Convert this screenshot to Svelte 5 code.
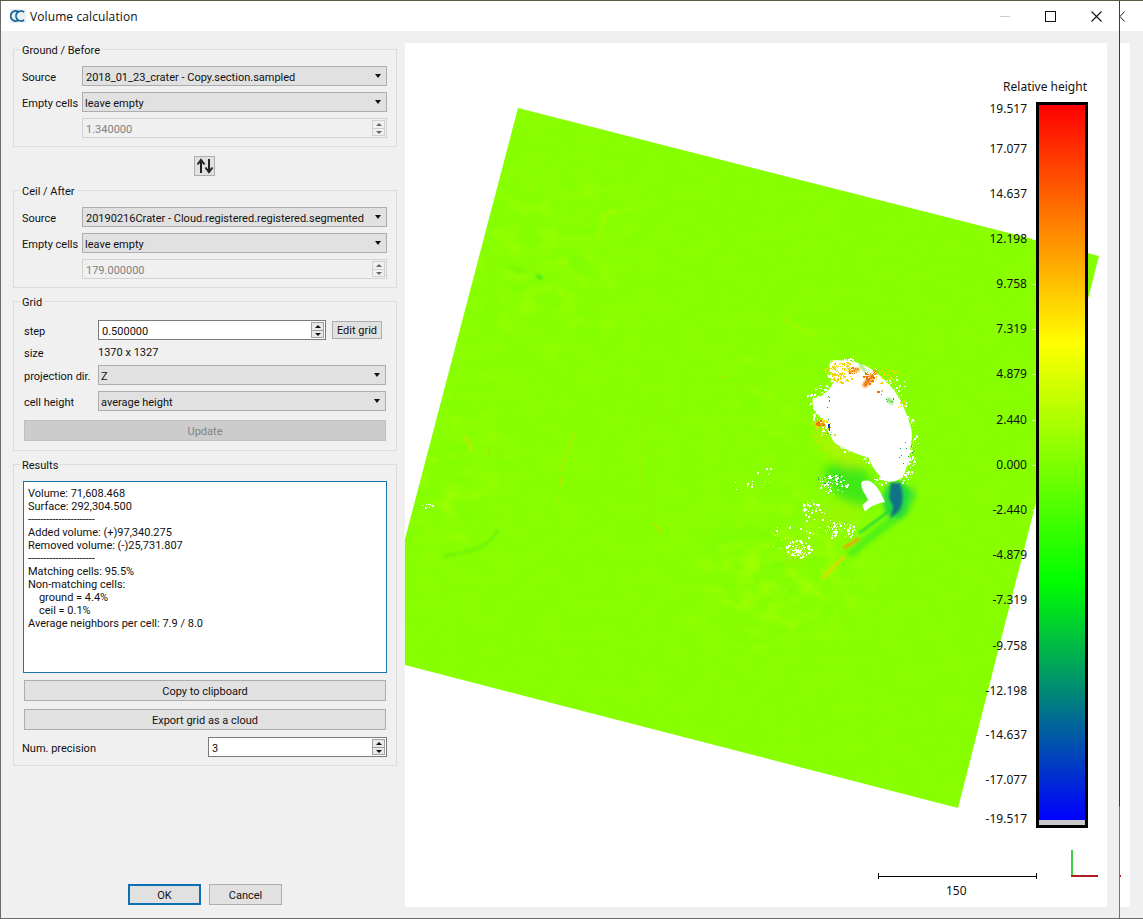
<script>
	// seeded so the specks land in the same place on every run
	let seed = 41;
	function rnd() {
		seed = (seed * 16807) % 2147483647;
		return seed / 2147483647;
	}

	function cluster(cx, cy, rx, ry, n) {
		const out = [];
		for (let i = 0; i < n; i++) {
			const a = rnd() * Math.PI * 2;
			const r = Math.sqrt(rnd());
			out.push({ x: Math.round(cx + Math.cos(a) * r * rx), y: Math.round(cy + Math.sin(a) * r * ry), s: rnd() > 0.7 ? 2 : 1 });
		}
		return out;
	}

	// rough fringe along the crater rim
	const rim = [[812, 400], [820, 392], [830, 388], [833, 375], [850, 362], [870, 372], [885, 385], [900, 400], [908, 420], [912, 440], [910, 460], [902, 478], [880, 478], [868, 458], [845, 445], [825, 430]];
	const rimSpecks = rim.flatMap(([x, y]) => cluster(x, y, 7, 7, 22));

	// page coordinates
	const whiteSpecks = [
		...rimSpecks,
		...cluster(833, 484, 14, 10, 70),
		...cluster(799, 548, 13, 9, 90),
		...cluster(810, 506, 10, 6, 28),
		...cluster(840, 530, 16, 8, 60),
		...cluster(820, 523, 22, 12, 26),
		...cluster(908, 462, 6, 18, 50),
		...cluster(838, 372, 14, 10, 70),
		...cluster(818, 412, 8, 12, 40),
		...cluster(742, 484, 12, 6, 8),
		...cluster(768, 475, 14, 7, 7),
		...cluster(430, 505, 12, 2, 10),
		...cluster(790, 535, 20, 20, 22),
		...cluster(890, 385, 16, 10, 30)
	];
	const yellowSpecks = [
		...cluster(838, 368, 14, 8, 80),
		...cluster(840, 378, 12, 5, 40),
		...cluster(822, 424, 10, 7, 34),
		...cluster(885, 376, 18, 8, 36),
		...cluster(900, 398, 6, 10, 16),
		...cluster(825, 440, 14, 12, 16)
	];
	const orangeSpecks = [...cluster(853, 370, 5, 4, 16), ...cluster(820, 423, 4, 3, 10), ...cluster(868, 378, 5, 7, 36), ...cluster(880, 392, 3, 3, 6)];
	const greenSpecks = [...cluster(830, 420, 4, 28, 8), ...cluster(905, 450, 8, 14, 10), ...cluster(830, 480, 14, 6, 14), ...cluster(890, 400, 4, 4, 5)];

	const ticks = [
		['19.517', 109], ['17.077', 149], ['14.637', 194], ['12.198', 239], ['9.758', 284],
		['7.319', 329], ['4.879', 374], ['2.440', 420], ['0.000', 465], ['-2.440', 510],
		['-4.879', 555], ['-7.319', 600], ['-9.758', 646], ['-12.198', 691], ['-14.637', 735],
		['-17.077', 780], ['-19.517', 819]
	];

	const results = `Volume: 71,608.468
Surface: 292,304.500
----------------------
Added volume: (+)97,340.275
Removed volume: (-)25,731.807
----------------------
Matching cells: 95.5%
Non-matching cells:
    ground = 4.4%
    ceil = 0.1%
Average neighbors per cell: 7.9 / 8.0`;
</script>

<div class="screen">
	<div class="window">
		<header class="titlebar">
			<svg class="logo" viewBox="0 0 16 14" width="16" height="14">
				<rect x="0" y="0" width="16" height="14" fill="#e8f1f6" />
				<path d="M8 2.600 A5 5 0 1 0 8 11.400" fill="none" stroke="#17618f" stroke-width="1.700" />
				<path d="M14 3 A5 5 0 1 0 14 11" fill="none" stroke="#17618f" stroke-width="1.700" />
			</svg>
			<span class="title">Volume calculation</span>
			<div class="controls">
				<span class="min"></span>
				<span class="max"></span>
				<svg class="close" viewBox="0 0 11 11" width="11" height="11">
					<path d="M0.500 0.500 L10.500 10.500 M10.500 0.500 L0.500 10.500" stroke="#111" stroke-width="1.100" />
				</svg>
			</div>
		</header>

		<div class="body">
			<aside class="panel">
				<section class="group g-source">
					<span class="group-title">Ground / Before</span>
					<div class="form-row">
						<span class="lbl">Source</span>
						<div class="combo"><span class="mid">2018_01_23_crater - Copy.section.sampled</span><i></i></div>
					</div>
					<div class="form-row">
						<span class="lbl">Empty cells</span>
						<div class="combo"><span>leave empty</span><i></i></div>
					</div>
					<div class="form-row">
						<span class="lbl"></span>
						<div class="spin disabled">
							<span>1.340000</span>
							<div class="arrows"><b class="up"></b><b class="down"></b></div>
						</div>
					</div>
				</section>

				<div class="swap-row">
					<button class="swap" aria-label="Swap">
						<svg viewBox="0 0 18 16" width="18" height="16">
							<path d="M5 15 V3 M1.500 6.500 L5 2 L8.500 6.500" fill="none" stroke="#222" stroke-width="2" />
							<path d="M13 1 V13 M9.500 9.500 L13 14 L16.500 9.500" fill="none" stroke="#222" stroke-width="2" />
						</svg>
					</button>
				</div>

				<section class="group g-source">
					<span class="group-title">Ceil / After</span>
					<div class="form-row">
						<span class="lbl">Source</span>
						<div class="combo"><span class="mid">20190216Crater - Cloud.registered.registered.segmented</span><i></i></div>
					</div>
					<div class="form-row">
						<span class="lbl">Empty cells</span>
						<div class="combo"><span>leave empty</span><i></i></div>
					</div>
					<div class="form-row">
						<span class="lbl"></span>
						<div class="spin disabled">
							<span>179.000000</span>
							<div class="arrows"><b class="up"></b><b class="down"></b></div>
						</div>
					</div>
				</section>

				<section class="group g-grid">
					<span class="group-title">Grid</span>
					<div class="grid-row">
						<span class="lbl2">step</span>
						<div class="spin live step">
							<span>0.500000</span>
							<div class="arrows"><b class="up"></b><b class="down"></b></div>
						</div>
						<button class="edit">Edit grid</button>
					</div>
					<div class="grid-row size">
						<span class="lbl2">size</span>
						<span>1370 x 1327</span>
					</div>
					<div class="grid-row">
						<span class="lbl2">projection dir.</span>
						<div class="combo"><span>Z</span><i></i></div>
					</div>
					<div class="grid-row">
						<span class="lbl2">cell height</span>
						<div class="combo"><span>average height</span><i></i></div>
					</div>
					<button class="wide off">Update</button>
				</section>

				<section class="group g-results">
					<span class="group-title">Results</span>
					<div class="report">{results}</div>
					<button class="wide copy">Copy to clipboard</button>
					<button class="wide export">Export grid as a cloud</button>
					<div class="precision">
						<span class="lbl-prec">Num. precision</span>
						<div class="spin live prec">
							<span>3</span>
							<div class="arrows"><b class="up"></b><b class="down"></b></div>
						</div>
					</div>
				</section>

				<div class="actions">
					<button class="dlg ok">OK</button>
					<button class="dlg">Cancel</button>
				</div>
			</aside>

			<main class="view">
				<svg class="cloud" viewBox="405 43 702 864" width="702" height="864">
					<defs>
						<filter id="b1" x="-50%" y="-50%" width="200%" height="200%"><feGaussianBlur stdDeviation="0.5" /></filter>
						<filter id="b2" x="-50%" y="-50%" width="200%" height="200%"><feGaussianBlur stdDeviation="1.500" /></filter>
						<filter id="c3" x="-50%" y="-50%" width="200%" height="200%"><feGaussianBlur stdDeviation="3" /></filter>
						<filter id="c8" x="-50%" y="-50%" width="200%" height="200%"><feGaussianBlur stdDeviation="8" /></filter>
						<filter id="c20" x="-50%" y="-50%" width="200%" height="200%"><feGaussianBlur stdDeviation="14" /></filter>
						<filter id="soft" x="-50%" y="-50%" width="200%" height="200%"><feGaussianBlur stdDeviation="30" /></filter>
						<filter id="mottle-green" x="0" y="0" width="100%" height="100%" color-interpolation-filters="sRGB">
							<feTurbulence type="fractalNoise" baseFrequency="0.03 0.04" numOctaves="3" seed="7" />
							<feColorMatrix values="0 0 0 0 0.42  0 0 0 0 0.98  0 0 0 0 0.03  1.600 0 0 0 -0.700" />
						</filter>
						<filter id="mottle-yellow" x="0" y="0" width="100%" height="100%" color-interpolation-filters="sRGB">
							<feTurbulence type="fractalNoise" baseFrequency="0.05 0.07" numOctaves="3" seed="19" />
							<feColorMatrix values="0 0 0 0 0.72  0 0 0 0 1  0 0 0 0 0  1.800 0 0 0 -0.800" />
						</filter>
						<mask id="rough" maskUnits="userSpaceOnUse" x="405" y="43" width="702" height="864">
							<rect x="405" y="43" width="702" height="864" fill="#181818" />
							<g filter="url(#soft)">
								<ellipse cx="540" cy="260" rx="100" ry="90" fill="#777" />
								<ellipse cx="450" cy="470" rx="55" ry="100" fill="#888" />
								<ellipse cx="780" cy="570" rx="80" ry="60" fill="#fff" />
								<ellipse cx="770" cy="400" rx="50" ry="60" fill="#666" />
							</g>
						</mask>
						<clipPath id="sheet"><polygon points="518,108 1099,256 958,808 405,665 405,539" /></clipPath>
					</defs>
					<polygon points="518,108 1099,256 958,808 405,665 405,539" fill="#88ff00" />

					<g clip-path="url(#sheet)">
						<!-- mottled terrain, stronger away from the flat middle band -->
						<g mask="url(#rough)">
							<rect x="405" y="43" width="702" height="864" filter="url(#mottle-green)" />
							<rect x="405" y="43" width="702" height="864" filter="url(#mottle-yellow)" />
						</g>

						<!-- smudges and ridges -->
						<g filter="url(#b2)" fill="none" stroke-linecap="round" opacity="0.7">
							<path d="M445 556 C 470 550 485 552 498 530" stroke="#60ee08" stroke-width="3" />
							<path d="M510 268 L 525 272" stroke="#66f010" stroke-width="2" />
							<path d="M538 276 L 541 278" stroke="#30e020" stroke-width="4" />
							<path d="M605 215 L 598 240" stroke="#b8f400" stroke-width="2" />
							<path d="M620 212 C 610 210 600 215 605 222" stroke="#c0f400" stroke-width="1.500" />
							<path d="M783 318 C 790 325 805 330 815 335" stroke="#c0f000" stroke-width="2" />
						</g>
						<g filter="url(#b1)" fill="none" stroke-width="1" opacity="0.8">
							<path d="M575 433 C 565 452 560 473 559 500" stroke="#d2d800" />
							<path d="M670 402 C 650 420 643 437 640 463 C 640 480 645 503 650 520" stroke="#a4ee00" />
							<path d="M653 523 L 662 533" stroke="#d8d000" stroke-width="1.500" />
							<path d="M720 378 L 730 375" stroke="#c8e000" />
							<path d="M465 437 C 470 443 472 447 471 452" stroke="#d8e000" stroke-width="2" />
							<path d="M489 447 L 488 455" stroke="#a0e800" stroke-width="1.500" />
						</g>

						<!-- crater, traced in 3x coordinates from x 700, y 340 -->
						<g transform="translate(700 340) scale(0.3333)">
							<g filter="url(#c20)">
								<path d="M370 390 C 430 340 500 365 525 450 L 510 500 C 470 490 390 490 370 390 Z" fill="#40e814" />
								<path d="M310 530 C 380 480 440 480 500 510 L 400 570 Z" fill="#a0f400" opacity="0.7" />
								<path d="M340 260 L 440 330 L 510 370 L 440 390 L 360 320 Z" fill="#c4f000" opacity="0.6" />
								<path d="M250 620 L 340 590 L 330 650 L 260 670 Z" fill="#b0f000" opacity="0.6" />
							</g>
							<g filter="url(#c8)">
								<path d="M440 640 C 480 600 530 560 590 510 L 610 530 C 570 570 510 600 460 650 Z" fill="#50f018" />
								<ellipse cx="592" cy="480" rx="44" ry="56" fill="#20d840" />
								<path d="M640 430 L 650 470 L 610 540 Z" fill="#50ec20" />
							</g>
							<path d="M392 62 C 440 58 480 66 510 85 C 550 112 590 150 610 200 C 625 235 640 270 635 300 C 628 340 625 380 608 410 C 590 425 570 430 552 420 C 530 400 515 380 505 352 C 470 345 430 325 405 310 C 385 280 375 250 360 230 C 345 215 335 195 338 178 C 360 170 375 165 385 150 C 395 140 400 130 402 120 C 390 100 385 85 392 62 Z" fill="#fff" />
							<path d="M485 425 C 505 415 525 425 545 465 L 555 485 C 535 490 515 495 495 515 L 487 495 L 505 480 C 495 460 480 445 485 425 Z" fill="#fff" />
							<g filter="url(#c3)">
								<path d="M572 428 L 600 430 C 610 460 612 490 595 515 L 570 535 L 580 500 L 568 475 Z" fill="#0a6090" opacity="0.85" />
							</g>
							<g filter="url(#c3)" fill="none" stroke-linecap="round">
								<path d="M570 510 C 540 535 510 555 480 578" stroke="#10d048" stroke-width="6" />
								<path d="M435 622 L 475 598" stroke="#eaa400" stroke-width="9" />
								<path d="M370 715 C 390 690 415 665 432 650" stroke="#e8d800" stroke-width="8" />
								<path d="M495 135 L 525 98" stroke="#f07800" stroke-width="14" />
								<path d="M450 95 L 475 88" stroke="#f0a000" stroke-width="10" />
								<path d="M480 72 L 500 100" stroke="#60e020" stroke-width="5" />
								<path d="M565 178 L 575 188" stroke="#70e030" stroke-width="9" />
								<path d="M350 250 L 370 252" stroke="#f09000" stroke-width="10" />
							</g>
						</g>

						{#each whiteSpecks as p}
							<rect x={p.x} y={p.y} width={p.s} height={p.s} fill="#fff" />
						{/each}
						{#each yellowSpecks as p}
							<rect x={p.x} y={p.y} width={p.s} height={p.s} fill="#f2d800" />
						{/each}
						{#each orangeSpecks as p}
							<rect x={p.x} y={p.y} width={p.s} height={p.s} fill="#f07000" />
						{/each}
						{#each greenSpecks as p}
							<rect x={p.x} y={p.y} width="1" height="1" fill="#10a050" />
						{/each}
						<rect x="828" y="424" width="2" height="4" fill="#0a3fb0" />
						<rect x="829" y="428" width="1" height="3" fill="#0a6070" />
					</g>
				</svg>

				<div class="legend-title">Relative height</div>
				{#each ticks as [label, y]}
					<span class="tick-label" style="top: {y - 43 - 8}px">{label}</span>
					<span class="tick" style="top: {y - 43}px"></span>
				{/each}
				<div class="bar"><div class="ramp"></div><div class="nan"></div></div>

				<div class="scale"></div>
				<span class="scale-label">150</span>
				<span class="axis-y"></span>
				<span class="axis-x"></span>
			</main>
		</div>
	</div>

	<div class="edge"></div>

	<div class="behind">
		<div class="behind-top">
			<svg viewBox="0 0 5 11" width="5" height="11"><path d="M4.500 0.500 L0 5.500 L4.500 10.500" fill="none" stroke="#222" stroke-width="1" /></svg>
		</div>
		<div class="behind-strip"></div>
		<div class="behind-main">
			<div class="behind-white"><span class="red-dot"></span></div>
			<div class="behind-gray"></div>
		</div>
	</div>
</div>

<style>
	:global(body) { margin: 0; background: #f0f0f0; }

	.screen {
		width: 1143px;
		height: 919px;
		display: flex;
		overflow: hidden;
		font-family: Roboto, "Liberation Sans", sans-serif;
		font-size: 11px;
		color: #111;
		box-sizing: border-box;
		border-top: 1px solid #5a5a3c;
		border-bottom: 1px solid #6a6a6a;
	}

	.window {
		width: 1119px;
		flex: none;
		display: flex;
		flex-direction: column;
		background: #f0f0f0;
		border-left: 1px solid #6a6a6a;
		box-sizing: border-box;
	}

	.titlebar {
		height: 30px;
		flex: none;
		background: #fff;
		display: flex;
		align-items: center;
		padding-left: 9px;
	}
	.logo { margin-right: 4px; }
	.title { font-size: 12px; font-family: "Open Sans", sans-serif; letter-spacing: 0.1px; }
	.controls { margin-left: auto; display: flex; align-items: center; }
	.min { width: 10px; height: 1px; background: #ccc; margin-right: 35px; }
	.max { width: 9px; height: 9px; border: 1px solid #111; margin-right: 35px; }
	.close { margin-right: 17px; }

	.body {
		flex: 1;
		min-height: 0;
		display: flex;
		padding: 12px 12px 11px 12px;
	}

	.panel {
		width: 384px;
		flex: none;
		margin-right: 8px;
		padding-top: 6px;
		display: flex;
		flex-direction: column;
	}

	.group {
		position: relative;
		border: 1px solid #dcdcdc;
		box-sizing: border-box;
	}
	.group-title {
		position: absolute;
		left: 6px;
		top: -6px;
		padding: 0 2px;
		line-height: 14px;
		background: #f0f0f0;
	}

	.g-source {
		height: 98px;
		padding: 16px 9px 0 9px;
		display: flex;
		flex-direction: column;
		gap: 6px;
	}
	.form-row { display: flex; align-items: center; height: 20px; flex: none; }
	.lbl { width: 60px; flex: none; margin-left: -1px; padding-top: 2px; }

	.combo {
		flex: 1;
		height: 20px;
		box-sizing: border-box;
		background: #e1e1e1;
		border: 1px solid #adadad;
		display: flex;
		align-items: center;
		justify-content: space-between;
		padding: 0 4px 0 2px;
		white-space: nowrap;
		min-width: 0;
	}
	.combo span { padding-top: 2px; }
	.combo span.mid { padding-left: 1px; }
	.combo i {
		width: 0;
		height: 0;
		border-left: 3.500px solid transparent;
		border-right: 3.500px solid transparent;
		border-top: 4px solid #111;
		flex: none;
		margin-right: 1px;
	}

	.spin {
		flex: 1;
		height: 20px;
		box-sizing: border-box;
		display: flex;
		align-items: center;
		justify-content: space-between;
		padding: 0 1px 0 3px;
	}
	.spin > span { padding-top: 2px; }
	.spin.disabled { border: 1px solid #d2d2d2; background: #f0f0f0; color: #808080; }
	.spin.live { border: 1px solid #7a7a7a; background: #fff; }

	.arrows { display: flex; flex-direction: column; width: 13px; height: 16px; }
	.arrows b {
		flex: 1;
		border: 1px solid #d0d0d0;
		background: #f0f0f0;
		position: relative;
	}
	.arrows b + b { border-top: 0; }
	.spin.live .arrows b { border-color: #a0a0a0; background: #e8e8e8; }
	.arrows b::after {
		content: "";
		position: absolute;
		left: 2.500px;
		top: 2px;
		border-left: 3px solid transparent;
		border-right: 3px solid transparent;
	}
	.arrows .up::after { border-bottom: 3px solid #666; }
	.arrows .down::after { border-top: 3px solid #666; }
	.spin.live .arrows b::after { border-bottom-color: #111; border-top-color: #111; }

	.swap-row { height: 43px; flex: none; display: flex; justify-content: center; align-items: flex-start; padding: 9px 1px 0 0; box-sizing: border-box; }
	.swap {
		width: 21px;
		height: 20px;
		padding: 0;
		background: #e1e1e1;
		border: 1px solid #adadad;
		display: flex;
		align-items: center;
		justify-content: center;
	}

	.g-grid {
		height: 150px;
		margin-top: 13px;
		padding: 18px 10px 0 10px;
		display: flex;
		flex-direction: column;
	}
	.grid-row { display: flex; align-items: center; height: 20px; flex: none; margin-bottom: 6px; }
	.grid-row.size { height: 13px; margin: 0 0 6px; }
	.lbl2 { width: 74px; flex: none; padding-top: 2px; }
	.step { flex: none; width: 228px; }
	.edit {
		margin-left: 6px;
		width: 50px;
		height: 18px;
		padding: 1px 0 0;
		font: inherit;
		color: inherit;
		background: #e1e1e1;
		border: 1px solid #adadad;
	}

	button.wide {
		height: 21px;
		width: 362px;
		flex: none;
		padding: 1px 0 0;
		font: inherit;
		color: #111;
		background: #e1e1e1;
		border: 1px solid #adadad;
	}
	button.off { background: #ccc; border-color: #bfbfbf; color: #838383; margin-top: 3px; }

	.g-results {
		height: 302px;
		margin-top: 13px;
		padding: 16px 9px 0 9px;
		display: flex;
		flex-direction: column;
	}
	.report {
		height: 192px;
		flex: none;
		box-sizing: border-box;
		background: #fff;
		border: 1px solid #1876a8;
		padding: 5px 4px;
		line-height: 13px;
		white-space: pre-wrap;
	}
	.g-results button.wide { margin-left: 1px; }
	.copy { margin-top: 7px; }
	.export { margin-top: 8px; }
	.precision {
		margin-top: 7px;
		height: 20px;
		display: flex;
		align-items: center;
		justify-content: space-between;
	}
	.lbl-prec { margin-left: -1px; padding-top: 2px; }
	.prec { flex: none; width: 179px; }

	.actions {
		margin-top: auto;
		padding: 0 0 2px 115px;
		display: flex;
		gap: 8px;
	}
	.dlg {
		width: 73px;
		height: 21px;
		padding: 1px 0 0;
		font: inherit;
		color: #111;
		background: #e1e1e1;
		border: 1px solid #adadad;
		box-sizing: border-box;
	}
	.dlg.ok { border: 2px solid #0f6fb5; }

	.view {
		position: relative;
		width: 702px;
		flex: none;
		background: #fff;
		overflow: hidden;
	}
	.cloud { position: absolute; left: 0; top: 0; display: block; }

	.legend-title {
		position: absolute;
		right: 20px;
		top: 36px;
		font-size: 12px;
		line-height: 16px;
		white-space: nowrap;
		font-family: "Noto Sans", sans-serif;
	}
	.tick-label {
		position: absolute;
		right: 80px;
		font-size: 12px;
		line-height: 16px;
		white-space: nowrap;
		font-family: "Noto Sans", sans-serif;
	}
	.tick {
		position: absolute;
		left: 627px;
		width: 4px;
		height: 1px;
		background: rgba(255, 255, 255, 0.6);
	}
	.bar {
		position: absolute;
		left: 631px;
		top: 59px;
		width: 52px;
		height: 726px;
		box-sizing: border-box;
		border: 3px solid #000;
		display: flex;
		flex-direction: column;
	}
	.ramp {
		flex: 1;
		background: linear-gradient(to bottom, #f00 0%, #ff0 33.300%, #0f0 66.600%, #00f 100%);
	}
	.nan { height: 5px; background: #c8c8c8; flex: none; }

	.scale {
		position: absolute;
		left: 473px;
		top: 833px;
		width: 159px;
		height: 1px;
		background: #000;
	}
	.scale::before, .scale::after {
		content: "";
		position: absolute;
		top: -3px;
		width: 1px;
		height: 6px;
		background: #000;
	}
	.scale::before { left: 0; }
	.scale::after { right: 0; }
	.scale-label {
		position: absolute;
		left: 541px;
		top: 840px;
		font-size: 12px;
		line-height: 16px;
		font-family: "Noto Sans", sans-serif;
	}
	.axis-y {
		position: absolute;
		left: 666px;
		top: 807px;
		width: 2px;
		height: 26px;
		background: #3ecb3e;
	}
	.axis-x {
		position: absolute;
		left: 666px;
		top: 832px;
		width: 27px;
		height: 2px;
		background: #b02020;
	}

	.edge {
		width: 1px;
		flex: none;
		background: linear-gradient(to bottom, #2f3f4a 0, #2f3f4a 805px, #777 806px, #777 100%);
	}

	.behind { flex: 1; display: flex; flex-direction: column; min-width: 0; }
	.behind-top { height: 30px; flex: none; background: #fff; display: flex; align-items: center; }
	.behind-strip { height: 12px; flex: none; background: #f0f0f0; }
	.behind-main { flex: 1; display: flex; padding-bottom: 11px; }
	.behind-white { width: 10px; background: #fff; position: relative; }
	.behind-gray { flex: 1; background: #f0f0f0; }
	.red-dot { position: absolute; left: 0; top: 832px; width: 1px; height: 2px; background: #b02020; }
</style>
